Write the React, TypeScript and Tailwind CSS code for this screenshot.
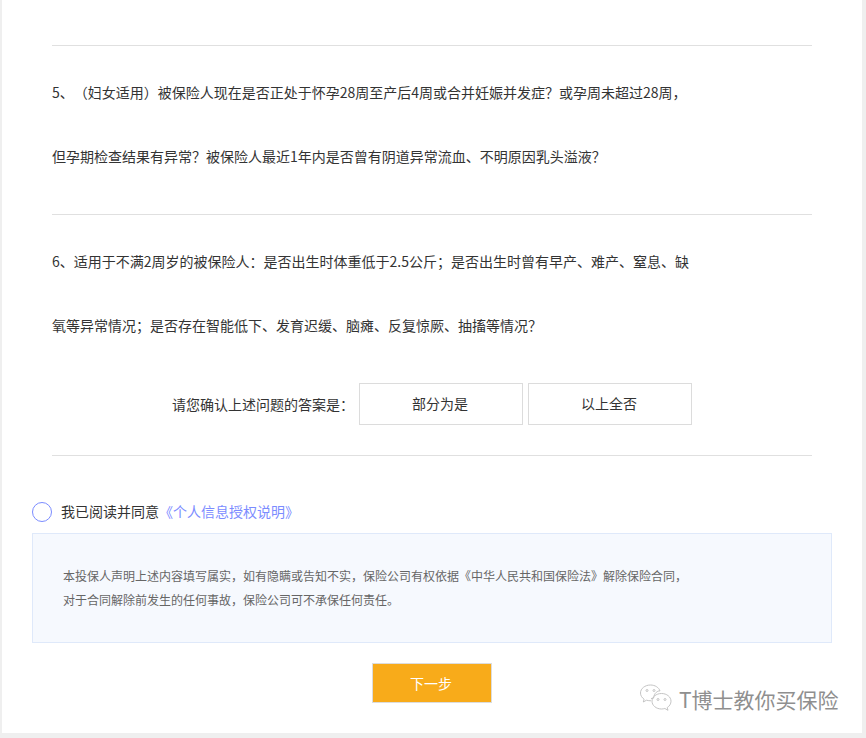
export default function App() {
  const q1 = ["5、（妇女适用）被保险人现在是否正处于怀孕28周至产后4周或合并妊娠并发症？或孕周未超过28周，", "但孕期检查结果有异常？被保险人最近1年内是否曾有阴道异常流血、不明原因乳头溢液？"];
  const q2 = ["6、适用于不满2周岁的被保险人：是否出生时体重低于2.5公斤；是否出生时曾有早产、难产、窒息、缺", "氧等异常情况；是否存在智能低下、发育迟缓、脑瘫、反复惊厥、抽搐等情况？"];
  return (
    <div className="h-[738px] w-[866px] overflow-hidden bg-[#efefef] font-['Noto_Sans_CJK_SC','Liberation_Sans',sans-serif] text-[14px] text-[#333333] [text-spacing-trim:space-all] [font-feature-settings:'palt'_0,'chws'_0]">
      <div className="relative ml-[2px] h-[733px] w-[860px] bg-white">
        <div className="px-[50px] pt-[45px]">
          <div className="h-px bg-[#e0e0e0]" />
          <div className="pt-[14px] pb-[26px]">
            {q1.map((t) => <p key={t} className="whitespace-nowrap leading-[64px]">{t}</p>)}
          </div>
          <div className="h-px bg-[#e0e0e0]" />
          <div className="pt-[14px]">
            {q2.map((t) => <p key={t} className="whitespace-nowrap leading-[64px]">{t}</p>)}
          </div>
          <div className="mt-[26px] flex items-center pl-[120px]">
            <span className="w-[187px] whitespace-nowrap leading-[40px]">请您确认上述问题的答案是：</span>
            <button className="h-[42px] w-[164px] border border-[#dcdcdc] bg-white pb-[2px] pr-[2px] text-[14px] text-[#333333]">部分为是</button>
            <button className="ml-[5px] h-[42px] w-[164px] border border-[#dcdcdc] bg-white pb-[2px] pr-[2px] text-[14px] text-[#333333]">以上全否</button>
          </div>
          <div className="mt-[30px] h-px bg-[#e0e0e0]" />
        </div>
        <div className="mt-[45px] flex items-center pl-[30px]">
          <span className="h-5 w-5 rounded-full border border-[#7b8cff] bg-white" />
          <span className="ml-[9px] whitespace-nowrap text-[#333333]">我已阅读并同意</span>
          <span className="whitespace-nowrap text-[#7b8cff]">《个人信息授权说明》</span>
        </div>
        <div className="mx-[30px] mt-[11px] h-[110px] border border-[#dfe9fa] bg-[#f6f9fe] px-[30px] pt-[30px] text-[12px] leading-[24px] text-[#666666]">
          <p className="whitespace-nowrap">本投保人声明上述内容填写属实，如有隐瞒或告知不实，保险公司有权依据《中华人民共和国保险法》解除保险合同，</p>
          <p className="whitespace-nowrap">对于合同解除前发生的任何事故，保险公司可不承保任何责任。</p>
        </div>
        <div className="mt-[20px] flex justify-center">
          <button className="h-10 w-[120px] border border-[#dcdcdc] bg-[#f8ab1a] pr-[2px] text-[14px] text-white">下一步</button>
        </div>
        <div className="absolute left-[636px] top-[684px] flex items-center gap-[5px]">
          <svg width="36" height="30" viewBox="0 0 36 30" fill="none" stroke="#bdbdbd" strokeWidth="0.9">
            <path d="M13 14.500c1 0 1.800-.2 2.600-.4C16 8.800 20 6.500 22 7C21 3.500 17 1 12.500 1C7 1 2.500 4.500 2.500 9c0 2.500 1.400 4.700 3.600 6.200L5.300 18l3.200-1.800c1.400.4 2.900.6 4.500.6" />
            <path d="M23.500 9.500c-5.300 0-9.500 3.400-9.500 7.700s4.200 7.800 9.500 7.800c1.200 0 2.300-.2 3.400-.5l3.100 1.800-.8-2.700c2.300-1.400 3.800-3.800 3.800-6.400 0-4.300-4.200-7.700-9.500-7.700z" />
            <circle cx="9" cy="6.500" r="1" />
            <circle cx="16" cy="6.500" r="1" />
            <circle cx="20" cy="15.500" r="1" />
            <circle cx="27" cy="15.500" r="1" />
          </svg>
          <span className="whitespace-nowrap text-[21px] leading-[28px] text-[#8f8f8f] [text-shadow:1px_1px_0_#ffffff]">T博士教你买保险</span>
        </div>
      </div>
    </div>
  );
}
